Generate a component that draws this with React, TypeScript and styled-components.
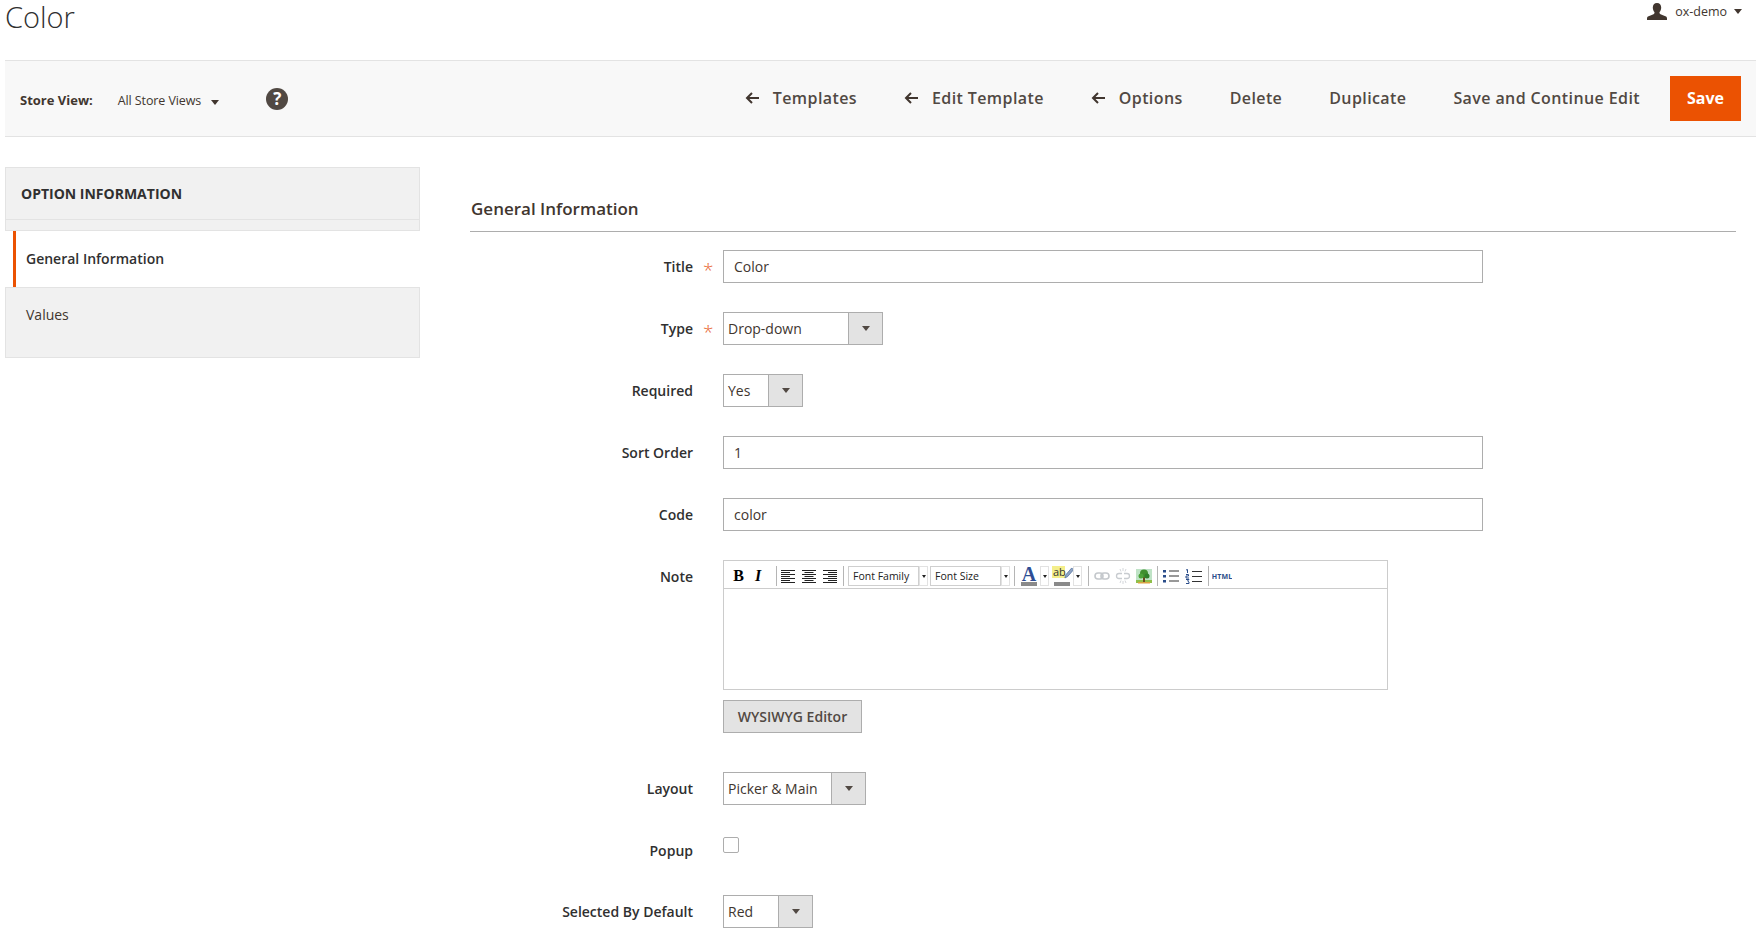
import React from "react";
import styled, { createGlobalStyle } from "styled-components";

const Global = createGlobalStyle`
  html, body { margin: 0; padding: 0; background: #fff; }
  body { font-family: "Open Sans", sans-serif; color: #303030; font-size: 14px; }
  * { box-sizing: border-box; }
`;

const Page = styled.div`
  width: 1762px;
  height: 932px;
  overflow: hidden;
  background: #fff;
`;

const Header = styled.header`
  height: 60px;
  padding: 0 20px 0 5px;
  display: flex;
  justify-content: space-between;
  align-items: flex-start;
`;

const PageTitle = styled.h1`
  margin: 0;
  font-weight: 300;
  font-size: 29px;
  line-height: 33px;
  color: #303030;
`;

const User = styled.div`
  display: flex;
  align-items: center;
  height: 22px;
  color: #41362f;
`;

const UserName = styled.span`
  margin: 0 7px 0 8px;
  font-size: 12.5px;
`;

const Caret = styled.span<{ $w?: number; $h?: number; $c?: string }>`
  display: inline-block;
  width: 0;
  height: 0;
  border-left: ${(p) => (p.$w ?? 8) / 2}px solid transparent;
  border-right: ${(p) => (p.$w ?? 8) / 2}px solid transparent;
  border-top: ${(p) => p.$h ?? 5}px solid ${(p) => p.$c ?? "#41362f"};
`;

const ScopeCaret = styled(Caret)`
  margin-top: 7px;
`;

const Toolbar = styled.div`
  height: 77px;
  margin: 0 6px 0 5px;
  padding: 0 15px 0 15px;
  background: #f8f8f8;
  border-top: 1px solid #e3e3e3;
  border-bottom: 1px solid #e3e3e3;
  display: flex;
  align-items: center;
  justify-content: space-between;
`;

const ScopeGroup = styled.div`
  display: flex;
  align-items: center;
`;

const ScopeLabel = styled.span`
  font-weight: 700;
  font-size: 13px;
  color: #41362f;
  margin-top: 3px;
`;

const ScopeValue = styled.span`
  font-size: 12.5px;
  color: #41362f;
  margin: 3px 10px 0 25px;
  letter-spacing: -0.1px;
`;

const HelpBadge = styled.span`
  width: 22px;
  height: 22px;
  border-radius: 50%;
  background: #514943;
  color: #fff;
  font-weight: 700;
  font-size: 17px;
  line-height: 22px;
  text-align: center;
  margin-left: 47px;
`;

const Actions = styled.div`
  display: flex;
  align-items: center;
`;

const ActionButton = styled.span`
  display: inline-flex;
  align-items: center;
  padding: 0 23.5px 2px;
  font-weight: 600;
  font-size: 16px;
  letter-spacing: 0.4px;
  color: #514943;
`;

const BackArrow = styled.svg`
  width: 14px;
  height: 12px;
  margin-right: 14px;
  flex: none;
`;

const SaveButton = styled.span`
  display: inline-flex;
  align-items: center;
  justify-content: center;
  width: 71px;
  height: 45px;
  padding-bottom: 2px;
  margin-left: 6.5px;
  background: #eb5202;
  color: #fff;
  font-weight: 700;
  font-size: 16px;
`;

const Columns = styled.div`
  display: flex;
  align-items: flex-start;
  padding: 30px 26px 0 5px;
`;

const Sidebar = styled.aside`
  width: 415px;
  flex: none;
  background: #f1f1f1;
  border: 1px solid #e3e3e3;
`;

const SideTitle = styled.div`
  height: 52px;
  padding-left: 15px;
  margin-bottom: 10px;
  border-bottom: 1px solid #e3e3e3;
  display: flex;
  align-items: center;
  font-weight: 700;
  font-size: 14px;
  color: #303030;
`;

const SideItem = styled.div<{ $active?: boolean }>`
  height: ${(p) => (p.$active ? 57 : 70)}px;
  margin: ${(p) => (p.$active ? "0 -1px" : "0")};
  padding-left: ${(p) => (p.$active ? 8 : 0)}px;
  background: ${(p) => (p.$active ? "#fff" : "#f1f1f1")};
  border-top: 1px solid #e3e3e3;
  display: flex;
`;

const SideLink = styled.div<{ $active?: boolean }>`
  flex: 1;
  height: ${(p) => (p.$active ? "56px" : "53px")};
  display: flex;
  align-items: center;
  padding-left: ${(p) => (p.$active ? 10 : 20)}px;
  padding-bottom: ${(p) => (p.$active ? 2 : 0)}px;
  border-left: ${(p) => (p.$active ? "3px solid #eb5202" : "none")};
  font-weight: ${(p) => (p.$active ? 600 : 400)};
  color: ${(p) => (p.$active ? "#303030" : "#41362f")};
`;

const Main = styled.main`
  flex: 1;
  margin-left: 50px;
`;

const SectionTitle = styled.h2`
  margin: 0 0 18px;
  height: 65px;
  padding: 29px 0 0 1px;
  border-bottom: 1px solid #adadad;
  font-weight: 600;
  font-size: 17px;
  line-height: 26px;
  color: #41362f;
`;

const Row = styled.div<{ $gap?: number }>`
  display: grid;
  grid-template-columns: 223px 30px 1fr;
  margin-bottom: ${(p) => p.$gap ?? 29}px;
`;

const Label = styled.label`
  height: 33px;
  line-height: 33px;
  text-align: right;
  font-weight: 600;
  color: #303030;
`;

const Star = styled.span`
  height: 33px;
  line-height: 40px;
  padding-left: 10px;
  color: #e8642c;
  font-size: 19px;
  font-weight: 300;
`;

const TextInput = styled.div`
  width: 760px;
  height: 33px;
  padding: 0 10px;
  line-height: 31px;
  border: 1px solid #adadad;
  background: #fff;
  color: #41362f;
`;

const Select = styled.div<{ $w: number }>`
  width: ${(p) => p.$w}px;
  height: 33px;
  display: flex;
  border: 1px solid #adadad;
  background: #fff;
`;

const SelectText = styled.span`
  flex: 1;
  padding-left: 4px;
  line-height: 31px;
  color: #41362f;
`;

const SelectArrow = styled.span`
  width: 34px;
  flex: none;
  display: flex;
  align-items: center;
  justify-content: center;
  background: #e3e3e3;
  border-left: 1px solid #adadad;
`;

const Check = styled.span`
  display: block;
  width: 16px;
  height: 16px;
  margin-top: 3px;
  border: 1px solid #adadad;
  border-radius: 2px;
  background: #fff;
`;

const Editor = styled.div`
  width: 665px;
  height: 130px;
  border: 1px solid #cccccc;
  background: #fff;
`;

const EditorBar = styled.div`
  height: 28px;
  border-bottom: 1px solid #cccccc;
  padding: 5px 0 0 5px;
  display: flex;
  align-items: flex-start;
`;

const ToolBtn = styled.span<{ $w?: number; $after?: number }>`
  width: ${(p) => p.$w ?? 18}px;
  height: 20px;
  margin-right: ${(p) => p.$after ?? 2}px;
  flex: none;
  display: flex;
  align-items: center;
  justify-content: center;
  overflow: hidden;
`;

const BoldGlyph = styled.span`
  font-family: "Liberation Serif", serif;
  font-weight: 700;
  font-size: 16px;
  color: #000;
`;

const ItalicGlyph = styled(BoldGlyph)`
  font-style: italic;
`;

const Sep = styled.span<{ $l: number; $r: number }>`
  width: 1px;
  height: 20px;
  flex: none;
  background: #b5b5b5;
  margin: 0 ${(p) => p.$r}px 0 ${(p) => p.$l}px;
`;

const FontBox = styled.span<{ $w: number }>`
  width: ${(p) => p.$w}px;
  height: 20px;
  flex: none;
  padding-left: 4px;
  font-size: 10.5px;
  line-height: 18px;
  color: #222;
  background: #fff;
  border: 1px solid #cfcfcf;
`;

const FontArrow = styled.span`
  width: 9px;
  height: 20px;
  flex: none;
  margin: 0 2px 0 0;
  display: flex;
  align-items: center;
  justify-content: center;
  border: 1px solid #e2e2e2;
`;

const ColorBtn = styled.span`
  width: 22px;
  height: 20px;
  flex: none;
  display: flex;
  flex-direction: column;
  align-items: center;
`;

const ColorLetter = styled.span`
  font-family: "Liberation Serif", serif;
  font-weight: 700;
  font-size: 20px;
  line-height: 16px;
  color: #2e4d94;
`;

const ColorBar = styled.span`
  width: 16px;
  height: 4px;
  background: #8a8a8a;
  flex: none;
`;

const HighlightGlyph = styled.span`
  font-size: 11px;
  line-height: 12px;
  height: 16px;
  width: 20px;
  padding-left: 1px;
  color: #333;
  background: linear-gradient(#f4ee8a 0 12px, transparent 12px);
  background-size: 13px 100%;
  background-repeat: no-repeat;
  display: flex;
`;

const PenSvg = styled.svg`
  flex: none;
  margin-left: -2px;
`;

const HtmlGlyph = styled.span`
  font-size: 7px;
  font-weight: 700;
  letter-spacing: 0.2px;
  color: #2a4d8a;
`;

const EditorButton = styled.div`
  width: 139px;
  height: 33px;
  margin-top: 10px;
  padding-bottom: 1px;
  display: flex;
  align-items: center;
  justify-content: center;
  background: #e3e3e3;
  border: 1px solid #adadad;
  color: #514943;
  font-weight: 600;
  font-size: 14px;
`;

const Arrow = () => (
  <BackArrow viewBox="0 0 14 12" fill="none" stroke="#41362f" strokeWidth="2">
    <path d="M14 6H2M7 1L2 6l5 5" />
  </BackArrow>
);

const Lines = ({ mode }: { mode: "l" | "c" | "r" }) => {
  const rows: number[] = [2, 4, 6, 8, 10, 12, 14];
  return (
    <svg width="14" height="14" viewBox="0 0 14 14" stroke="#222" strokeWidth="1">
      {rows.map((y, i) => {
        const short = i % 2 === 1;
        const w = short ? 9 : 14;
        const x = mode === "l" ? 0 : mode === "c" ? (14 - w) / 2 : 14 - w;
        return <line key={y} x1={x} x2={x + w} y1={y - 0.5} y2={y - 0.5} />;
      })}
    </svg>
  );
};

const LinkIcon = () => (
  <svg width="16" height="12" viewBox="0 0 16 12" fill="none" stroke="#c4c8cc" strokeWidth="1.6">
    <rect x="1" y="3" width="8" height="6" rx="3" />
    <rect x="7" y="3" width="8" height="6" rx="3" />
  </svg>
);

const UnlinkIcon = () => (
  <svg width="16" height="18" viewBox="0 0 16 18" fill="none" stroke="#c8ccd0" strokeWidth="1.3">
    <path d="M7 6.500H4a2.500 2.500 0 000 5h3M9 6.500h3a2.500 2.500 0 010 5H9" />
    <path d="M8 1v3M5 2l1 2.500M11 2l-1 2.500M8 14v3M5 16l1-2.500M11 16l-1-2.500" strokeWidth="0.8" />
  </svg>
);

const ImageIcon = () => (
  <svg width="18" height="18" viewBox="0 0 18 18">
    <rect x="1" y="2" width="16" height="14" fill="#bfe3c6" />
    <rect x="1" y="13" width="16" height="3" fill="#8fbf4a" />
    <rect x="8" y="9" width="2" height="6" fill="#6b4a1e" />
    <circle cx="9" cy="6.500" r="4" fill="#3f8f2f" />
    <circle cx="6" cy="9" r="2.500" fill="#4da33a" />
    <circle cx="12" cy="9" r="2.500" fill="#2f7f2a" />
    <rect x="3" y="15" width="12" height="1.500" fill="#d9a441" />
  </svg>
);

const BulletIcon = () => (
  <svg width="16" height="14" viewBox="0 0 16 14">
    <g fill="#2a4d8a">
      <rect x="0" y="1" width="3" height="2.500" />
      <rect x="0" y="6" width="3" height="2.500" />
      <rect x="0" y="11" width="3" height="2.500" />
    </g>
    <g fill="#333">
      <rect x="6" y="1.500" width="10" height="1" />
      <rect x="6" y="6.500" width="10" height="1" />
      <rect x="6" y="11.500" width="10" height="1" />
    </g>
  </svg>
);

const NumberIcon = () => (
  <svg width="17" height="15" viewBox="0 0 17 15" fill="none">
    <path d="M1 1l1.500-.5V4M1 5.500h2.500V7H1v2h3M1 10.500h3L2.500 12 4 13v1.500H1" stroke="#2a4d8a" strokeWidth="1" />
    <g fill="#333">
      <rect x="7" y="2" width="10" height="1" />
      <rect x="7" y="7" width="10" height="1" />
      <rect x="7" y="12" width="10" height="1" />
    </g>
  </svg>
);

const PenIcon = () => (
  <PenSvg width="10" height="13" viewBox="0 0 11 14">
    <path d="M1 13l1-3.500 6.500-7.500 2 2L4 11.500z" fill="#8fa4c4" stroke="#4a6a9a" strokeWidth="0.8" />
  </PenSvg>
);

const UserIcon = () => (
  <svg width="20" height="17" viewBox="0 0 20 17" fill="#41362f">
    <path d="M10 0c2.700 0 4.200 1.900 4.200 4.600 0 1.900-.7 3.500-1.600 4.500-.3.900 0 1.700.9 2.100l4.900 2c1 .4 1.600 1.200 1.600 2.200V17H0v-1.600c0-1 .6-1.800 1.600-2.200l4.900-2c.9-.4 1.200-1.200.9-2.100-.9-1-1.600-2.600-1.600-4.500C5.800 1.900 7.300 0 10 0z" />
  </svg>
);

export default function App() {
  return (
    <Page>
      <Global />
      <Header>
        <PageTitle>Color</PageTitle>
        <User>
          <UserIcon />
          <UserName>ox-demo</UserName>
          <Caret />
        </User>
      </Header>

      <Toolbar>
        <ScopeGroup>
          <ScopeLabel>Store View:</ScopeLabel>
          <ScopeValue>All Store Views</ScopeValue>
          <ScopeCaret />
          <HelpBadge>?</HelpBadge>
        </ScopeGroup>
        <Actions>
          <ActionButton><Arrow />Templates</ActionButton>
          <ActionButton><Arrow />Edit Template</ActionButton>
          <ActionButton><Arrow />Options</ActionButton>
          <ActionButton>Delete</ActionButton>
          <ActionButton>Duplicate</ActionButton>
          <ActionButton>Save and Continue Edit</ActionButton>
          <SaveButton>Save</SaveButton>
        </Actions>
      </Toolbar>

      <Columns>
        <Sidebar>
          <SideTitle>OPTION INFORMATION</SideTitle>
          <SideItem $active>
            <SideLink $active>General Information</SideLink>
          </SideItem>
          <SideItem>
            <SideLink>Values</SideLink>
          </SideItem>
        </Sidebar>

        <Main>
          <SectionTitle>General Information</SectionTitle>

          <Row>
            <Label>Title</Label>
            <Star>*</Star>
            <TextInput>Color</TextInput>
          </Row>
          <Row>
            <Label>Type</Label>
            <Star>*</Star>
            <Select $w={160}>
              <SelectText>Drop-down</SelectText>
              <SelectArrow><Caret $c="#514943" /></SelectArrow>
            </Select>
          </Row>
          <Row>
            <Label>Required</Label>
            <span />
            <Select $w={80}>
              <SelectText>Yes</SelectText>
              <SelectArrow><Caret $c="#514943" /></SelectArrow>
            </Select>
          </Row>
          <Row>
            <Label>Sort Order</Label>
            <span />
            <TextInput>1</TextInput>
          </Row>
          <Row>
            <Label>Code</Label>
            <span />
            <TextInput>color</TextInput>
          </Row>
          <Row $gap={39}>
            <Label>Note</Label>
            <span />
            <div>
              <Editor>
                <EditorBar>
                  <ToolBtn $w={19} $after={1}><BoldGlyph>B</BoldGlyph></ToolBtn>
                  <ToolBtn $w={18} $after={2}><ItalicGlyph>I</ItalicGlyph></ToolBtn>
                  <Sep $l={7} $r={1} />
                  <ToolBtn $w={19} $after={2}><Lines mode="l" /></ToolBtn>
                  <ToolBtn $w={19} $after={2}><Lines mode="c" /></ToolBtn>
                  <ToolBtn $w={19} $after={4}><Lines mode="r" /></ToolBtn>
                  <Sep $l={0} $r={4} />
                  <FontBox $w={71}>Font Family</FontBox>
                  <FontArrow><Caret $w={5} $h={3} $c="#222" /></FontArrow>
                  <FontBox $w={71}>Font Size</FontBox>
                  <FontArrow><Caret $w={5} $h={3} $c="#222" /></FontArrow>
                  <Sep $l={2} $r={3} />
                  <ColorBtn>
                    <ColorLetter>A</ColorLetter>
                    <ColorBar />
                  </ColorBtn>
                  <FontArrow><Caret $w={5} $h={3} $c="#222" /></FontArrow>
                  <ColorBtn>
                    <HighlightGlyph>ab<PenIcon /></HighlightGlyph>
                    <ColorBar />
                  </ColorBtn>
                  <FontArrow><Caret $w={5} $h={3} $c="#222" /></FontArrow>
                  <Sep $l={4} $r={4} />
                  <ToolBtn $w={18} $after={3}><LinkIcon /></ToolBtn>
                  <ToolBtn $w={18} $after={3}><UnlinkIcon /></ToolBtn>
                  <ToolBtn $w={18} $after={4}><ImageIcon /></ToolBtn>
                  <Sep $l={0} $r={3} />
                  <ToolBtn $w={19} $after={4}><BulletIcon /></ToolBtn>
                  <ToolBtn $w={19} $after={5}><NumberIcon /></ToolBtn>
                  <Sep $l={0} $r={3} />
                  <ToolBtn $w={20}><HtmlGlyph>HTML</HtmlGlyph></ToolBtn>
                </EditorBar>
              </Editor>
              <EditorButton>WYSIWYG Editor</EditorButton>
            </div>
          </Row>
          <Row>
            <Label>Layout</Label>
            <span />
            <Select $w={143}>
              <SelectText>Picker &amp; Main</SelectText>
              <SelectArrow><Caret $c="#514943" /></SelectArrow>
            </Select>
          </Row>
          <Row $gap={28}>
            <Label>Popup</Label>
            <span />
            <Check />
          </Row>
          <Row>
            <Label>Selected By Default</Label>
            <span />
            <Select $w={90}>
              <SelectText>Red</SelectText>
              <SelectArrow><Caret $c="#514943" /></SelectArrow>
            </Select>
          </Row>
        </Main>
      </Columns>
    </Page>
  );
}
